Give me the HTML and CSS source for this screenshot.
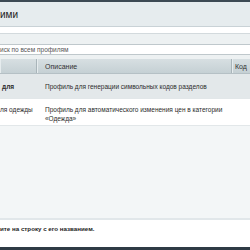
FILE: index.html
```html
<!doctype html>
<html lang="ru">
  <head>
    <meta charset="UTF-8" />
    <title>Профили</title>
    <link rel="stylesheet" href="styles.css">
  </head>
  <body>
    <div class="c-topbar"></div>

    <div class="c-title">
      <h1>ими</h1>
    </div>

    <div class="c-tabs"></div>

    <div class="c-filter">
      <div class="c-filter__input">иск по всем профилям</div>
    </div>

    <div class="c-table">
      <div class="c-table__head">
        <div class="c-table__cell c-table__cell--name"></div>
        <div class="c-table__cell c-table__cell--desc">Описание</div>
        <div class="c-table__cell c-table__cell--code">Код</div>
      </div>

      <div class="c-table__row c-table__row--selected">
        <div class="c-table__cell c-table__cell--name"><b>для</b></div>
        <div class="c-table__cell c-table__cell--desc">Профиль для генерации символьных кодов разделов</div>
        <div class="c-table__cell c-table__cell--code"></div>
      </div>

      <div class="c-table__row c-table__row--top">
        <div class="c-table__cell c-table__cell--name">ля одежды</div>
        <div class="c-table__cell c-table__cell--desc">Профиль для автоматического изменения цен в категории «Одежда»</div>
        <div class="c-table__cell c-table__cell--code"></div>
      </div>
    </div>

    <div class="c-empty"></div>

    <div class="c-footer">
      <p>ите на строку с его названием.</p>
    </div>

    <div class="c-bottombar"></div>
  </body>
</html>
```

FILE: styles.css
```css
html,
body {
  margin: 0;
  padding: 0;
}

body {
  width: 250px;
  height: 250px;
  overflow: hidden;
  display: flex;
  flex-direction: column;
  font-family: 'Liberation Sans', Arial, sans-serif;
  font-size: 6.5px;
  color: #2b2b2b;
  background: #fff;
}

.c-topbar {
  height: 2px;
  background: #3d4a54;
}

.c-title {
  height: 24px;
  display: flex;
  align-items: center;
  background: #e6ecee;
  border-bottom: 1px solid #c9d2d6;
}

.c-title h1 {
  margin: 0;
  font-size: 10px;
  font-weight: normal;
  color: #222;
}

.c-tabs {
  height: 6px;
  background: #fff;
  border-bottom: 1px solid #d3dadd;
}

.c-filter {
  padding: 10px 0 4px;
  background: #edf1f2;
}

.c-filter__input {
  height: 9px;
  line-height: 9px;
  background: #fff;
  border: 1px solid #bfc8cc;
  border-left: 0;
  border-right: 0;
  color: #555;
}

.c-table__head,
.c-table__row {
  display: flex;
}

.c-table__head {
  height: 15px;
  align-items: center;
  background: linear-gradient(#d7dfe2, #c5d0d4);
  border-bottom: 1px solid #b5c0c5;
  box-sizing: border-box;
  font-size: 7px;
  color: #333;
}

.c-table__head .c-table__cell {
  height: 100%;
  display: flex;
  align-items: center;
  border-right: 1px solid #a9b5ba;
  box-shadow: inset 1px 0 0 #e6ecee;
}

.c-table__cell {
  box-sizing: border-box;
  flex-shrink: 0;
}

.c-table__cell--name {
  width: 37px;
}

.c-table__cell--desc {
  width: 195px;
  padding-left: 8px;
}

.c-table__cell--code {
  flex: 1;
  padding-left: 3px;
}

.c-table__head .c-table__cell--code {
  border-right: 0;
}

.c-table__row {
  border-bottom: 1px solid #e2e7e9;
  background: #fff;
}

.c-table__row .c-table__cell {
  line-height: 9px;
}

.c-table__row--selected {
  height: 24px;
  align-items: center;
  background: #e3e8ea;
}

.c-table__row--selected .c-table__cell--name {
  padding-left: 2px;
}

.c-table__row--top {
  height: 27px;
  padding-top: 6px;
  box-sizing: border-box;
}

b {
  font-weight: bold;
}

.c-empty {
  flex: 1;
  background: #f3f6f7;
  border-bottom: 2px solid #e1e7ea;
}

.c-footer {
  height: 27px;
  padding-top: 5px;
  box-sizing: border-box;
  background: #fff;
}

.c-footer p {
  margin: 0;
  font-size: 6.2px;
  font-weight: bold;
  color: #222;
}

.c-bottombar {
  height: 3px;
  background: #2e3b45;
}
```
